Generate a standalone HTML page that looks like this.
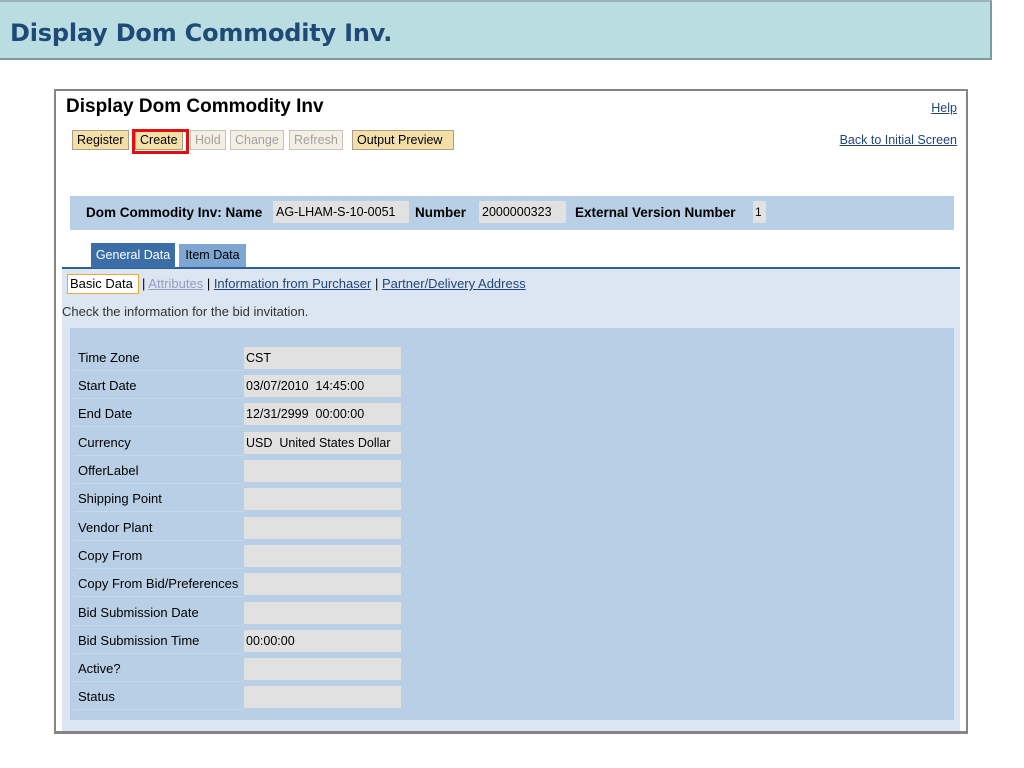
<!DOCTYPE html>
<html><head><style>
*{margin:0;padding:0;box-sizing:border-box}
body{width:1024px;height:768px;background:#fff;position:relative;overflow:hidden;font-family:"Liberation Sans",Arial,sans-serif;font-size:12px;color:#000}
.a{position:absolute;white-space:nowrap}
.hdr{left:0;top:0;width:992px;height:60px;background:#b9dde1;border:2px solid #7f9aa0;border-left:none;border-top-color:#9bb5ba}
.hdr span{position:absolute;left:10px;top:17px;font-family:"DejaVu Sans",sans-serif;font-weight:bold;font-size:24px;color:#1f4a78;letter-spacing:-0.2px}
.frame{left:54px;top:89px;width:914px;height:645px;border:2px solid #858585;border-bottom-width:3px}
.btn{top:130px;height:20px;border:1px solid #a8a08a;background:#f4dfa8;font-size:12.5px;line-height:18px;padding:0 4px}
.dis{background:#f3efe4;color:#a0a0a0;border-color:#c8c4b8}
a,.u{color:#22457a;text-decoration:underline}
.lbl{left:78px;font-size:13px;line-height:22px}
.val{left:244px;width:157px;height:22px;background:#e1e1e1;line-height:22px;padding-left:2px;font-size:12.5px}
.sep{left:74px;width:170px;height:1px;background:#c8d8ea}
</style></head><body>
<div class="a hdr"><span>Display Dom Commodity Inv.</span></div>
<div class="a frame"></div>
<div class="a" style="left:66px;top:96px;font-size:19px;font-weight:bold">Display Dom Commodity Inv</div>
<a class="a" style="right:67px;top:101px;font-size:12.5px">Help</a>
<a class="a" style="right:67px;top:133px;font-size:12.5px">Back to Initial Screen</a>
<div class="a btn" style="left:72px">Register</div>
<div class="a btn" style="left:135px">Create</div>
<div class="a" style="left:132px;top:129px;width:57px;height:25px;border:3px solid #e01010"></div>
<div class="a btn dis" style="left:190px">Hold</div>
<div class="a btn dis" style="left:230px">Change</div>
<div class="a btn dis" style="left:289px">Refresh</div>
<div class="a btn" style="left:352px;width:102px">Output Preview</div>
<div class="a" style="left:70px;top:196px;width:884px;height:34px;background:#b8cfe6"></div>
<div class="a" style="left:86px;top:205px;font-weight:bold;font-size:13.5px">Dom Commodity Inv: Name</div>
<div class="a" style="left:273px;top:201px;width:136px;height:22px;background:#e1e1e1;line-height:22px;padding-left:3px;font-size:12.5px">AG-LHAM-S-10-0051</div>
<div class="a" style="left:415px;top:205px;font-weight:bold;font-size:13.5px">Number</div>
<div class="a" style="left:479px;top:201px;width:87px;height:22px;background:#e1e1e1;line-height:22px;padding-left:3px;font-size:12.5px">2000000323</div>
<div class="a" style="left:575px;top:205px;font-weight:bold;font-size:13.5px">External Version Number</div>
<div class="a" style="left:753px;top:201px;width:13px;height:22px;background:#e1e1e1;line-height:22px;padding-left:2px">1</div>
<div class="a" style="left:62px;top:269px;width:898px;height:462px;background:#dce6f2"></div>
<div class="a" style="left:62px;top:267px;width:898px;height:2px;background:#2f5f94"></div>
<div class="a" style="left:91px;top:243px;width:84px;height:25px;background:#3b6ea7;color:#fff;line-height:25px;text-align:center;font-size:12.5px">General Data</div>
<div class="a" style="left:179px;top:244px;width:67px;height:23px;background:#7ea6d2;line-height:23px;text-align:center;font-size:12.5px">Item Data</div>
<div class="a" style="left:67px;top:274px;width:72px;height:20px;border:1px solid #f0a830;background:#fff;line-height:18px;padding-left:2px;font-size:13px">Basic Data</div>
<div class="a" style="left:142px;top:276px;font-size:13px">| <span class="u" style="color:#9a9ac0">Attributes</span> | <span class="u">Information from Purchaser</span> | <span class="u">Partner/Delivery Address</span></div>
<div class="a" style="left:62px;top:304px;color:#333;font-size:13px">Check the information for the bid invitation.</div>
<div class="a" style="left:70px;top:328px;width:884px;height:392px;background:#b8cfe6"></div>
<div class="a lbl" style="top:347px">Time Zone</div><div class="a val" style="top:347px">CST</div><div class="a sep" style="top:370px"></div>
<div class="a lbl" style="top:375px">Start Date</div><div class="a val" style="top:375px">03/07/2010&nbsp; 14:45:00</div><div class="a sep" style="top:398px"></div>
<div class="a lbl" style="top:403px">End Date</div><div class="a val" style="top:403px">12/31/2999&nbsp; 00:00:00</div><div class="a sep" style="top:426px"></div>
<div class="a lbl" style="top:432px">Currency</div><div class="a val" style="top:432px">USD&nbsp; United States Dollar</div><div class="a sep" style="top:455px"></div>
<div class="a lbl" style="top:460px">OfferLabel</div><div class="a val" style="top:460px"></div><div class="a sep" style="top:483px"></div>
<div class="a lbl" style="top:488px">Shipping Point</div><div class="a val" style="top:488px"></div><div class="a sep" style="top:511px"></div>
<div class="a lbl" style="top:517px">Vendor Plant</div><div class="a val" style="top:517px"></div><div class="a sep" style="top:540px"></div>
<div class="a lbl" style="top:545px">Copy From</div><div class="a val" style="top:545px"></div><div class="a sep" style="top:568px"></div>
<div class="a lbl" style="top:573px">Copy From Bid/Preferences</div><div class="a val" style="top:573px"></div><div class="a sep" style="top:596px"></div>
<div class="a lbl" style="top:602px">Bid Submission Date</div><div class="a val" style="top:602px"></div><div class="a sep" style="top:625px"></div>
<div class="a lbl" style="top:630px">Bid Submission Time</div><div class="a val" style="top:630px">00:00:00</div><div class="a sep" style="top:653px"></div>
<div class="a lbl" style="top:658px">Active?</div><div class="a val" style="top:658px"></div><div class="a sep" style="top:681px"></div>
<div class="a lbl" style="top:686px">Status</div><div class="a val" style="top:686px"></div><div class="a sep" style="top:709px"></div>
</body></html>
